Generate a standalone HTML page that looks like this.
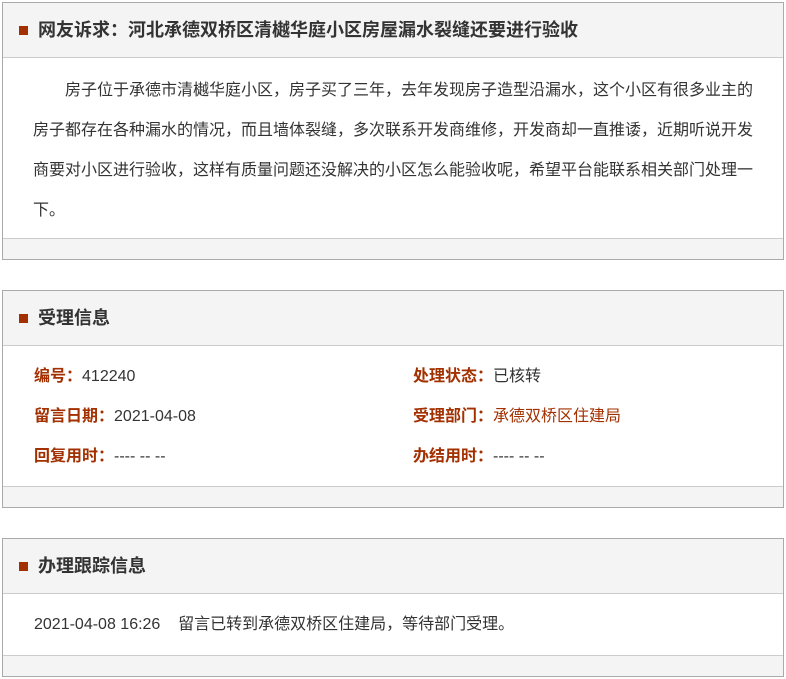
<!DOCTYPE html>
<html><head><meta charset="utf-8"><style>
*{margin:0;padding:0;box-sizing:border-box}
body{width:786px;height:679px;background:#fff;font-family:"Liberation Sans","Noto Sans CJK SC",sans-serif;color:#333;position:relative}
.p{position:absolute;left:2px;width:782px;border:1px solid #aaa;background:#fff;overflow:hidden}
.h{height:55px;background:#f4f4f4;border-bottom:1px solid #ccc;position:relative;font-size:18px;font-weight:bold;line-height:55px;padding-left:35px;color:#333}
.h:before{content:"";position:absolute;left:16px;top:23px;width:9px;height:9px;background:#a33000}
.f{height:21px;background:#f4f4f4;border-top:1px solid #ccc}
.b{font-size:16px;line-height:40px}
.r{position:absolute;font-size:16px;line-height:20px}
.l{color:#a33000;font-weight:bold}
.lk{color:#a33000}
</style></head><body>
<div class="p" style="top:2px;height:258px">
<div class="h">网友诉求：河北承德双桥区清樾华庭小区房屋漏水裂缝还要进行验收</div>
<div class="b" style="height:180px;padding:13px 0 0 30px;width:756px;text-indent:32px">房子位于承德市清樾华庭小区，房子买了三年，去年发现房子造型沿漏水，这个小区有很多业主的房子都存在各种漏水的情况，而且墙体裂缝，多次联系开发商维修，开发商却一直推诿，近期听说开发商要对小区进行验收，这样有质量问题还没解决的小区怎么能验收呢，希望平台能联系相关部门处理一下。</div>
<div class="f"></div>
</div>
<div class="p" style="top:290px;height:218px">
<div class="h">受理信息</div>
<div style="height:140px;position:relative">
<div class="r" style="left:31px;top:21px"><span class="l">编号：</span>412240</div>
<div class="r" style="left:31px;top:61px"><span class="l">留言日期：</span>2021-04-08</div>
<div class="r" style="left:31px;top:101px"><span class="l">回复用时：</span>---- -- --</div>
<div class="r" style="left:410px;top:21px"><span class="l">处理状态：</span>已核转</div>
<div class="r" style="left:410px;top:61px"><span class="l">受理部门：</span><span class="lk">承德双桥区住建局</span></div>
<div class="r" style="left:410px;top:101px"><span class="l">办结用时：</span>---- -- --</div>
</div>
<div class="f"></div>
</div>
<div class="p" style="top:538px;height:139px">
<div class="h">办理跟踪信息</div>
<div style="height:61px;position:relative">
<div class="r" style="left:31px;top:21px">2021-04-08 16:26&nbsp;&nbsp;&nbsp; 留言已转到承德双桥区住建局，等待部门受理。</div>
</div>
<div class="f"></div>
</div>
</body></html>
